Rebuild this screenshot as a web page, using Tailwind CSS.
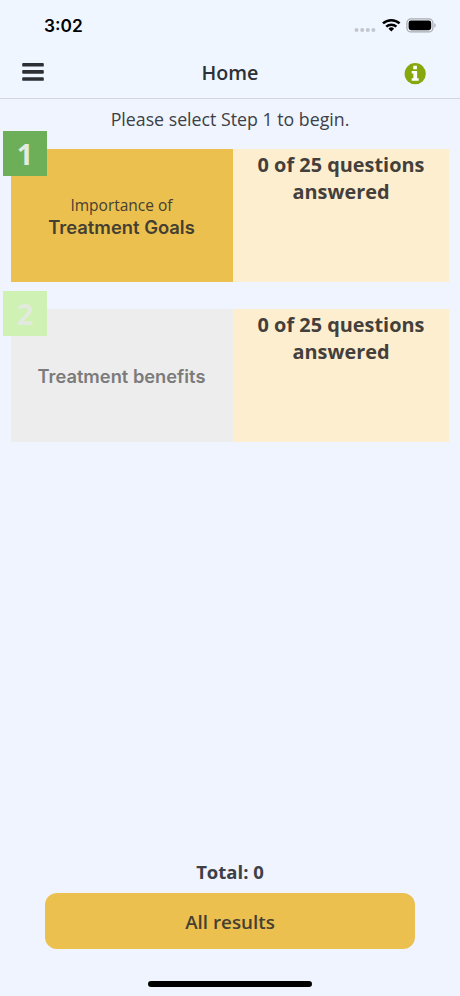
<!DOCTYPE html>
<html lang="en">
<head>
    <meta charset="UTF-8">
    <meta name="viewport" content="width=device-width, initial-scale=1.0">
    <title>Home</title>
    <script src="https://cdn.jsdelivr.net/npm/@tailwindcss/browser@4"></script>
</head>
<body class="bg-[#eff4ff]">
    <div class="flex h-[996px] w-[460px] flex-col overflow-hidden font-['Open_Sans','Noto_Sans',sans-serif] text-[#3d4047]">
        <!-- Status bar -->
        <div class="flex h-[50px] shrink-0 items-center justify-between bg-[#f0f6ff] pl-[44px] pr-[24px]">
            <span class="pt-[2px] font-['Inter',sans-serif] text-[17.3px] font-semibold leading-none text-black">3:02</span>
            <svg class="h-[20px] w-[82px]" viewBox="0 0 82 20">
                <g fill="#c3c6ce">
                    <circle cx="2.5" cy="15" r="2"/>
                    <circle cx="8.2" cy="15" r="2"/>
                    <circle cx="13.8" cy="15" r="2"/>
                    <circle cx="19.4" cy="15" r="2"/>
                </g>
                <g fill="none" stroke="#000" stroke-width="2.5">
                    <path d="M29 8.4a12.2 12.2 0 0 1 16.6 0"/>
                    <path d="M32.2 11.7a7.4 7.4 0 0 1 10.2 0"/>
                </g>
                <path d="M34.5 13.7a4 4 0 0 1 5.6 0L37.3 16.6Z"/>
                <rect x="52.9" y="3.9" width="26" height="13" rx="4" fill="none" stroke="#a6a9af" stroke-width="1.2"/>
                <rect x="54.6" y="5.6" width="22.6" height="9.6" rx="2.4"/>
                <path d="M80.3 8.3c1.8.6 1.8 3.6 0 4.2Z" fill="#a6a9af"/>
            </svg>
        </div>

        <!-- Navigation -->
        <header class="grid h-[49px] shrink-0 grid-cols-[1fr_auto_1fr] items-center border-b border-[#d3d6e1] bg-[#f0f6ff] pl-[22px] pr-[34px]">
            <svg class="mb-[4px] h-[18px] w-[22px]" viewBox="0 0 22 18" fill="#2c2f33">
                <rect x=".2" y="0" width="21.6" height="3.6" rx=".9"/>
                <rect x=".2" y="7.1" width="21.6" height="3.6" rx=".9"/>
                <rect x=".2" y="14.2" width="21.6" height="3.6" rx=".9"/>
            </svg>
            <h1 class="mb-[2px] ml-[12px] text-[19.7px] font-semibold leading-none text-[#2d3036]">Home</h1>
            <svg class="h-[22px] w-[22px] justify-self-end" viewBox="0 0 22 22">
                <circle cx="11.2" cy="10.7" r="10.6" fill="#86a80d"/>
                <path d="M9.3 2.8h3.6v3.4H9.3zM7.7 8h5.4v7.2h1.6v2.5h-7v-2.5h1.7v-4.7H7.7z" fill="#fff"/>
            </svg>
        </header>

        <main class="flex grow flex-col px-[11px]">
            <p class="mt-[8px] text-center text-[17.75px] leading-[24px]">Please select Step 1 to begin.</p>

            <!-- Step 1 -->
            <section class="relative mt-[18px] flex h-[133px]">
                <div class="flex w-[222px] flex-col items-center justify-center bg-[#ebc04f] pr-[1px] pt-[2px] text-[#453f32]">
                    <span class="text-[15.5px] leading-[21px]">Importance of</span>
                    <span class="font-['Inter',sans-serif] text-[18.4px] font-semibold leading-[22px]">Treatment Goals</span>
                </div>
                <div class="grow bg-[#feeed0] pt-[2px] text-center text-[19.9px] font-bold leading-[27px] text-[#443f3b]">0 of 25 questions<br>answered</div>
                <div class="absolute left-[-8px] top-[-18px] flex h-[45px] w-[44px] items-center justify-center bg-[#6dae59] text-[29px] font-bold text-[#e1ebdf]">1</div>
            </section>

            <!-- Step 2 -->
            <section class="relative mt-[27px] flex h-[133px]">
                <div class="flex w-[222px] items-center justify-center bg-[#ededed] pr-[1px] pt-[2px] text-[#7b7b7b]">
                    <span class="font-['Inter',sans-serif] text-[18.3px] font-semibold">Treatment benefits</span>
                </div>
                <div class="grow bg-[#feeed0] pt-[2px] text-center text-[19.9px] font-bold leading-[27px] text-[#443f3b]">0 of 25 questions<br>answered</div>
                <div class="absolute left-[-8px] top-[-18px] flex h-[45px] w-[44px] items-center justify-center bg-[#cff1b3] text-[29px] font-bold text-[#e2eade]">2</div>
            </section>
        </main>

        <!-- Results -->
        <footer class="flex shrink-0 flex-col items-center">
            <p class="text-[18.5px] font-bold leading-[24px]">Total: 0</p>
            <button class="mt-[9px] h-[56px] w-[370px] rounded-[12px] bg-[#ebc04f] pt-[2px] text-[18.8px] font-semibold text-[#453f32]">All results</button>
            <div class="mb-[9px] mt-[32px] h-[6px] w-[164px] rounded-full bg-black"></div>
        </footer>
    </div>
</body>
</html>
